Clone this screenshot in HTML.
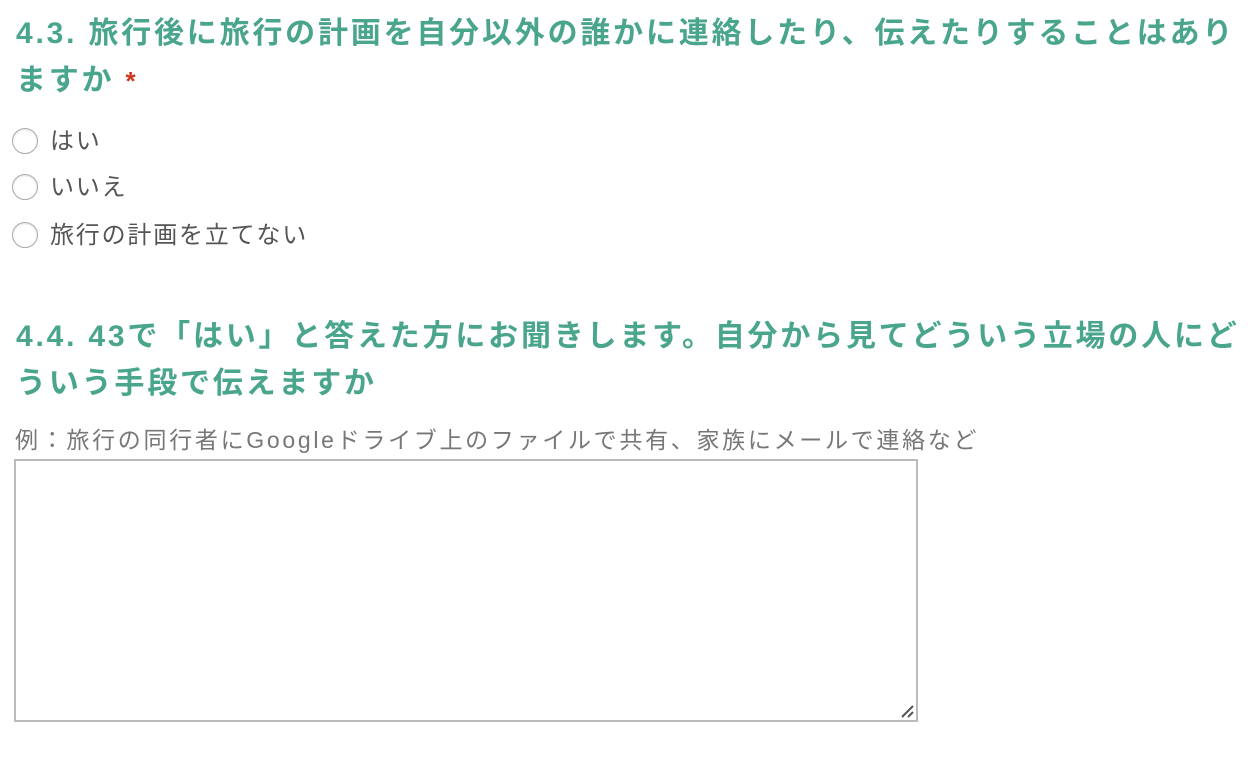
<!DOCTYPE html>
<html><head><meta charset="utf-8"><style>
body{margin:0;background:#fff;font-family:"Liberation Sans","Noto Sans CJK JP",sans-serif;}
.h{position:absolute;left:16px;color:#4aa58d;font-weight:bold;font-size:30px;line-height:47px;letter-spacing:2.8px;white-space:nowrap;}
.star{color:#d0381c;font-size:26px;}
.opt{position:absolute;left:12px;font-size:24px;letter-spacing:1.8px;color:#555;white-space:nowrap;line-height:28px;}
.opt i{display:inline-block;width:24px;height:24px;border:1px solid #aaa;border-radius:50%;vertical-align:-5px;margin-right:12px;box-shadow:inset 0 1px 2px rgba(0,0,0,.12);}
.hint{position:absolute;left:15px;top:421px;font-size:23px;letter-spacing:2.7px;color:#777;white-space:nowrap;}
.ta{position:absolute;left:14px;top:459px;width:900px;height:259px;border:2px solid #bbb;}
</style></head><body>
<div class="h" style="top:10px">4.3. 旅行後に旅行の計画を自分以外の誰かに連絡したり、伝えたりすることはあり<br>ますか <span class="star">*</span></div>
<div class="opt" style="top:128px"><i></i>はい</div>
<div class="opt" style="top:174px"><i></i>いいえ</div>
<div class="opt" style="top:222px"><i></i>旅行の計画を立てない</div>
<div class="h" style="top:313px">4.4. 43で「はい」と答えた方にお聞きします。自分から見てどういう立場の人にど<br>ういう手段で伝えますか</div>
<div class="hint">例：旅行の同行者にGoogleドライブ上のファイルで共有、家族にメールで連絡など</div>
<div class="ta"><svg style="position:absolute;right:2px;bottom:2px" width="14" height="14"><path d="M2 13L13 2M8 13L13 8" stroke="#555" stroke-width="2"/></svg></div>
</body></html>
